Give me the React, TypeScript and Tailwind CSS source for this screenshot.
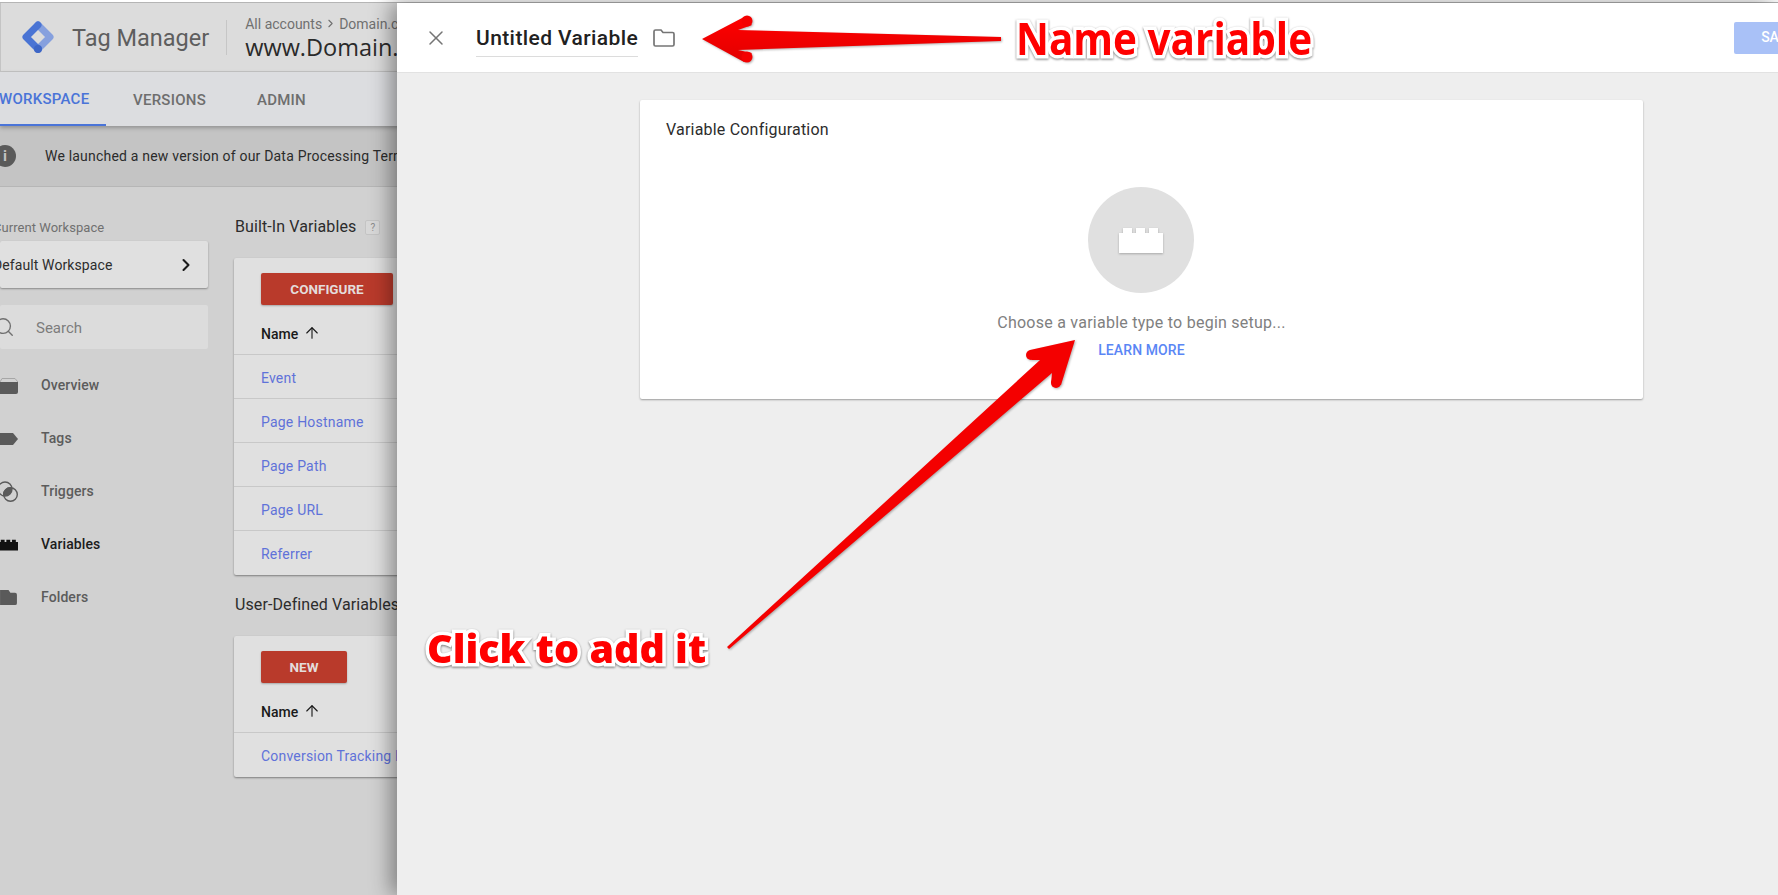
import { ArrowUp, ChevronRight, Search, X } from "lucide-react";

const roboto = "font-['Roboto','Liberation_Sans',sans-serif]";

function BrickIcon({ className }: { className?: string }) {
  return (
    <svg viewBox="0 0 44 26" className={className} fill="currentColor">
      <path d="M0 6h4V1h9v5h4V1h9v5h4V1h9v5h5v20H0z" />
    </svg>
  );
}

function TagLogo() {
  return (
    <svg viewBox="0 0 34 34" className="w-[34px] h-[34px] ml-[20px] shrink-0" fill="none" strokeWidth="7" strokeLinecap="round" strokeLinejoin="round">
      <path d="M17 5 29 17 17 29" stroke="#86a0de" />
      <path d="M17 5 5 17 17 29" stroke="#4a74d4" />
      <circle cx="17" cy="29" r="4" fill="#3d66c6" />
    </svg>
  );
}

function NavItem({ label, active, icon }: { label: string; active?: boolean; icon: React.ReactNode }) {
  return (
    <div className="h-[53px] flex items-center">
      <div className="w-[41px] h-[24px] relative overflow-hidden shrink-0">{icon}</div>
      <span className={`text-[14px] font-medium tracking-[0.1px] ${active ? "text-[#1c1c1c]" : "text-[#5c5c5c]"}`}>{label}</span>
    </div>
  );
}

function Row({ label, last }: { label: string; last?: boolean }) {
  return (
    <div className={`h-[44px] pl-[27px] pt-[3px] flex items-center text-[14px] tracking-[0.2px] text-[#5f72d9] whitespace-nowrap ${last ? "" : "border-b border-[#c8c8c8]"}`}>
      {label}
    </div>
  );
}

function TableCard({ button, buttonWidth, rows }: { button: string; buttonWidth: string; rows: string[] }) {
  return (
    <div className="w-[500px] bg-[#e0e0e0] rounded-[2px] shadow-[0_1px_2px_rgba(0,0,0,0.4)]">
      <div className="pt-[15px] pl-[27px]">
        <div className={`${buttonWidth} h-[32px] bg-[#b93a2b] rounded-[2px] shadow-[0_1px_2px_rgba(0,0,0,0.25)] flex items-center justify-center text-[13.5px] font-bold text-[#e4dcdb]`}>
          {button}
        </div>
      </div>
      <div className="h-[50px] pl-[27px] pt-[10px] flex items-center gap-[5px] border-b border-[#c8c8c8] text-[14px] font-medium text-[#1a1a1a]">
        Name
        <ArrowUp className="w-[18px] h-[18px] -mt-[3px]" strokeWidth={1.5} />
      </div>
      {rows.map((r, i) => (
        <Row key={r} label={r} last={i === rows.length - 1} />
      ))}
    </div>
  );
}

export default function App() {
  return (
    <div className={`${roboto} relative w-[1778px] h-[895px] overflow-hidden bg-white`}>
      <div className="h-[3px] bg-white border-b border-[#b5b5b5]" />

      {/* dimmed page behind the drawer */}
      <div className="h-[892px] bg-[#d1d1d1] overflow-hidden">
        <div className="h-[69px] bg-[#dcdcdc] border-l border-b border-[#c4c4c4] flex items-center">
          <TagLogo />
          <div className="ml-[17px] mt-[3px] text-[23.5px] text-[#5e5e5e] whitespace-nowrap">Tag Manager</div>
          <div className="ml-[17px] w-px h-[35px] bg-[#c6c6c6]" />
          <div className="ml-[18px] mt-[3px] whitespace-nowrap">
            <div className="flex items-center text-[14px] leading-[16px] text-[#707070]">
              All accounts
              <ChevronRight className="w-[13px] h-[13px] mx-[2px]" strokeWidth={2} />
              Domain.com
            </div>
            <div className="text-[23.5px] leading-[30px] font-['Open_Sans',sans-serif] text-[#2a2a2a]">www.Domain.com</div>
          </div>
        </div>

        <div className="h-[54px] bg-[#dcdde0] flex shadow-[0_2px_4px_rgba(0,0,0,0.25)] relative text-[15px] font-medium tracking-[0.25px]">
          <div className="w-[106px] pt-[2px] border-b-[2px] border-[#4a74d8] text-[#4a74d8] flex items-center overflow-hidden">
            <span className="-ml-[1px]">WORKSPACE</span>
          </div>
          <div className="ml-[27px] pt-[2px] flex items-center text-[#6e6e6e]">VERSIONS</div>
          <div className="ml-[51px] pt-[2px] flex items-center text-[#6e6e6e]">ADMIN</div>
        </div>

        <div className="h-[61px] bg-[#c4c4c4] border-b border-[#b6b6b6] flex items-center whitespace-nowrap">
          <div className="w-[22px] h-[22px] -ml-[6px] rounded-full bg-[#5a5a5a] flex items-center justify-center text-[15px] font-bold text-[#c4c4c4] shrink-0">i</div>
          <span className="ml-[29px] text-[14px] tracking-[0.2px] text-[#2b2b2b]">We launched a new version of our Data Processing Terms</span>
        </div>

        <div className="flex">
          <div className="w-[234px] shrink-0">
            <div className="mt-[33px] -ml-[7px] text-[13px] leading-[16px] tracking-[0.05px] text-[#707070] whitespace-nowrap">Current Workspace</div>
            <div className="mt-[5px] w-[208px] h-[47px] bg-[#e0e0e0] rounded-[2px] shadow-[0_1px_2px_rgba(0,0,0,0.35)] flex items-center justify-between pr-[12px]">
              <span className="-ml-[7px] mt-[2px] text-[14px] tracking-[0.1px] text-[#2d2d2d] whitespace-nowrap">Default Workspace</span>
              <ChevronRight className="w-[20px] h-[20px] text-[#1a1a1a]" strokeWidth={2.5} />
            </div>
            <div className="mt-[17px] w-[208px] h-[44px] bg-[#dcdcdc] rounded-[2px] flex items-center">
              <Search className="w-[22px] h-[22px] -ml-[7px] text-[#707070]" strokeWidth={1.5} />
              <span className="ml-[21px] mt-[2px] text-[15px] text-[#7c7c7c]">Search</span>
            </div>
            <div className="mt-[10px]">
              <NavItem
                label="Overview"
                icon={
                  <svg viewBox="0 0 18 16" className="absolute left-0 top-[4px] w-[18px] h-[16px]">
                    <path d="M0 4 2 .5h13L18 4v2H0z" fill="#d1d1d1" stroke="#a6a6a6" />
                    <path d="M0 4h18v10a2 2 0 0 1-2 2H0z" fill="#5a5a5a" />
                  </svg>
                }
              />
              <NavItem
                label="Tags"
                icon={
                  <svg viewBox="0 0 18 12" className="absolute left-0 top-[6px] w-[18px] h-[12px] text-[#5a5a5a]" fill="currentColor">
                    <path d="M0 0h13l5 6-5 6H0z" />
                  </svg>
                }
              />
              <NavItem
                label="Triggers"
                icon={
                  <svg viewBox="0 0 18 22" className="absolute left-0 top-[1px] w-[18px] h-[22px] text-[#5a5a5a]" fill="none" stroke="currentColor" strokeWidth="1.4">
                    <defs>
                      <clipPath id="triggerOverlap">
                        <circle cx="5" cy="8" r="7" />
                      </clipPath>
                    </defs>
                    <circle cx="5" cy="8" r="7" />
                    <circle cx="10.500" cy="13.500" r="6.800" />
                    <circle cx="10.500" cy="13.500" r="6.800" fill="currentColor" clipPath="url(#triggerOverlap)" />
                  </svg>
                }
              />
              <NavItem
                active
                label="Variables"
                icon={<BrickIcon className="absolute -left-[1px] top-[6px] w-[19px] h-[12px] text-[#111]" />}
              />
              <NavItem
                label="Folders"
                icon={
                  <svg viewBox="0 0 18 16" className="absolute left-0 top-[4px] w-[17px] h-[15px] text-[#5a5a5a]" fill="currentColor">
                    <path d="M0 0h9l2 3h5a2 2 0 0 1 2 2v9a2 2 0 0 1-2 2H0z" />
                  </svg>
                }
              />
            </div>
          </div>

          <div className="whitespace-nowrap">
            <div className="mt-[28px] h-[24px] pl-px flex items-center text-[16px] tracking-[0.1px] text-[#2c2c2c]">
              Built-In Variables
              <span className="ml-[9px] w-[15px] h-[15px] border border-[#c4c4c4] bg-[#d8d8d8] rounded-[2px] flex items-center justify-center text-[10px] text-[#8a8a8a]">?</span>
            </div>
            <div className="mt-[19px]">
              <TableCard button="CONFIGURE" buttonWidth="w-[132px]" rows={["Event", "Page Hostname", "Page Path", "Page URL", "Referrer"]} />
            </div>
            <div className="mt-[18px] h-[24px] pl-px flex items-center text-[16px] tracking-[0.1px] text-[#2c2c2c]">User-Defined Variables</div>
            <div className="mt-[19px]">
              <TableCard button="NEW" buttonWidth="w-[86px]" rows={["Conversion Tracking ID"]} />
            </div>
          </div>
        </div>
      </div>

      {/* drawer */}
      <div className="absolute left-[397px] top-[3px] right-0 bottom-0 bg-[#eeeeee] shadow-[-6px_0_20px_rgba(0,0,0,0.4)] overflow-hidden">
        <div className="h-[70px] bg-white border-b border-[#e2e2e2] flex items-center">
          <X className="w-[24px] h-[24px] ml-[27px] text-[#757575] shrink-0" strokeWidth={1.5} />
          <div className="ml-[28px] h-[36px] mt-[2px] pt-[2px] border-b border-[#dcdcdc] text-[21px] leading-[30px] tracking-[0.4px] text-[#212121] font-medium whitespace-nowrap">
            Untitled Variable
          </div>
          <svg viewBox="0 0 22 18" className="ml-[15px] w-[22px] h-[18px] shrink-0 text-[#757575]" fill="none" stroke="currentColor" strokeWidth="1.7">
            <path d="M1 2.500A1.500 1.500 0 0 1 2.500 1H8l2 2.500h9.500A1.500 1.500 0 0 1 21 5v10.500a1.500 1.500 0 0 1-1.500 1.500h-17A1.500 1.500 0 0 1 1 15.500z" />
          </svg>
          <div className="ml-[1059px] w-[90px] h-[32px] shrink-0 bg-[#a9c1f7] rounded-[2px] pl-[27px] flex items-center text-[14px] font-medium text-white">SAVE</div>
        </div>

        <div className="ml-[243px] mt-[27px] w-[1003px] h-[299px] bg-white rounded-[2px] shadow-[0_1px_2px_rgba(0,0,0,0.35)] flex flex-col items-center">
          <div className="self-stretch pl-[26px] pt-[20px] text-[16px] leading-[20px] tracking-[0.2px] text-[#2c2c2c]">Variable Configuration</div>
          <div className="mt-[47px] mr-[2px] w-[106px] h-[106px] rounded-full bg-[#e0e0e0] flex items-center justify-center">
            <BrickIcon className="w-[44px] h-[26px] text-white drop-shadow-[0_1px_1px_rgba(0,0,0,0.25)]" />
          </div>
          <div className="mt-[20px] text-[16px] leading-[20px] tracking-[0.25px] text-[#808080]">Choose a variable type to begin setup...</div>
          <div className="mt-[7px] text-[14px] leading-[20px] font-medium tracking-[0.1px] text-[#5a86f5]">LEARN MORE</div>
        </div>
      </div>

      {/* annotation arrows */}
      <svg className="absolute inset-0 w-[1778px] h-[895px] pointer-events-none drop-shadow-[1px_1px_1px_rgba(0,0,0,0.3)]" viewBox="0 0 1778 895">
        <defs>
          <linearGradient id="arrowRed" x1="0" y1="0" x2="0" y2="1">
            <stop offset="0" stopColor="#ff0000" />
            <stop offset="1" stopColor="#e20000" />
          </linearGradient>
        </defs>
        <polygon fill="url(#arrowRed)" points="702,39 744,17 752,25 738,30 1001,37 1001,41 738,50 752,53 744,62" />
        <g fill="#f40000">
          <circle cx="747" cy="21" r="5.500" />
          <circle cx="747" cy="57" r="5.500" />
          <polygon points="1075,340 1030,350 1032,360 1040,360 727,647 729,649 1052,373 1051,383 1061,385" />
          <circle cx="1031" cy="355" r="5" />
          <circle cx="1056" cy="383" r="5" />
        </g>
      </svg>

      {/* annotation labels */}
      <div className="absolute left-[1016px] top-[11px] origin-left scale-x-[0.92] text-[44px] leading-[54px] font-bold text-[#ff0000] whitespace-nowrap font-['Open_Sans',sans-serif] [-webkit-text-stroke:7px_white] [paint-order:stroke_fill] drop-shadow-[0_1px_1px_rgba(0,0,0,0.5)]">
        Name variable
      </div>
      <div className="absolute left-[427px] top-[621px] text-[39.5px] leading-[54px] font-extrabold text-[#ff0000] whitespace-nowrap font-['Open_Sans',sans-serif] [-webkit-text-stroke:7px_white] [paint-order:stroke_fill] drop-shadow-[0_1px_1px_rgba(0,0,0,0.5)]">
        Click to add it
      </div>
    </div>
  );
}
